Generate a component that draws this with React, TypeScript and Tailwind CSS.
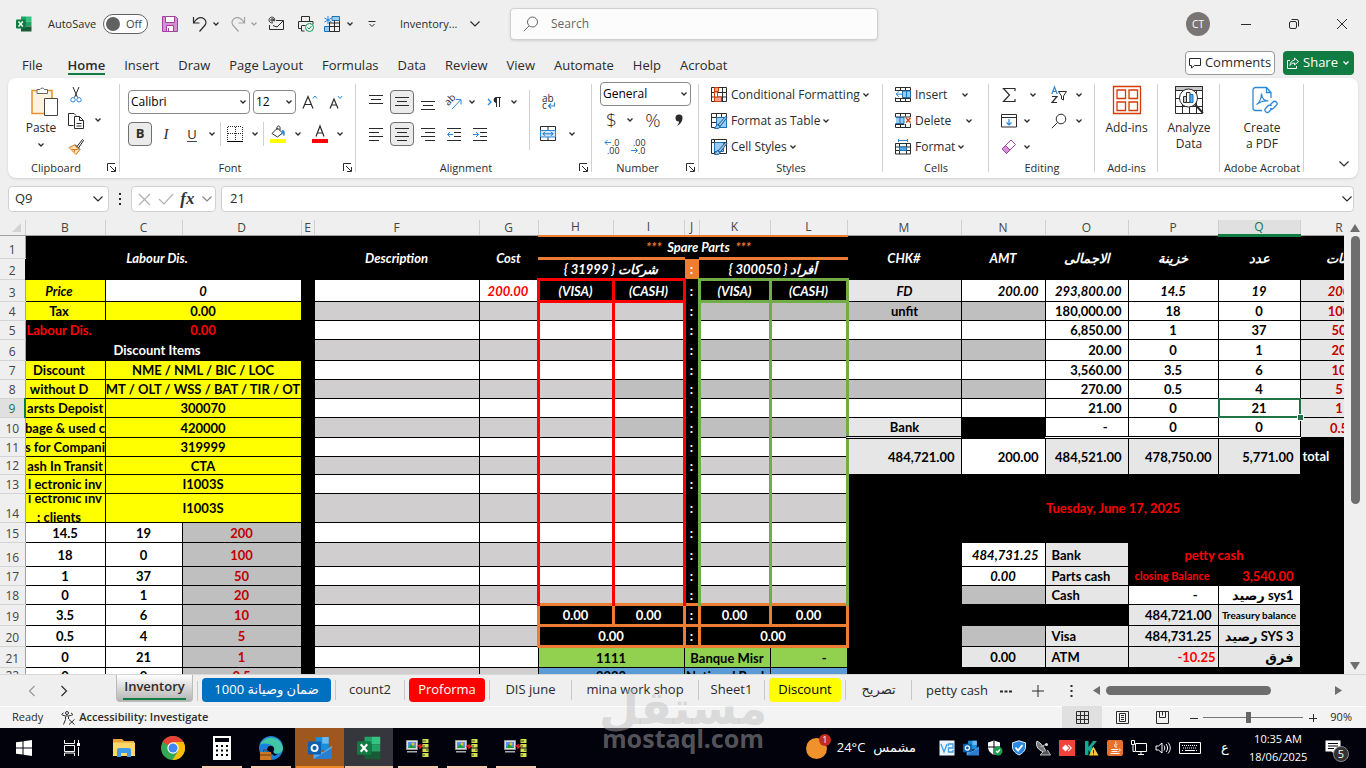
import type { ReactNode } from 'react'
import { clsx } from 'clsx'

function Ico({ w = 16, h = 16, className = '', children }: { w?: number; h?: number; className?: string; children: ReactNode }) {
  return (
    <svg width={w} height={h} viewBox={`0 0 ${w} ${h}`} fill="none" stroke="currentColor" className={`shrink-0 overflow-visible ${className}`} aria-hidden>
      {children}
    </svg>
  )
}

function Chev({ className = '' }: { className?: string }) {
  return (
    <Ico w={8} h={6} className={className}>
      <path d="M1.500 1.500 4 4l2.500-2.500" strokeWidth="1.300" />
    </Ico>
  )
}

function WideChev({ className = '' }: { className?: string }) {
  return (
    <Ico w={12} h={8} className={className}>
      <path d="m1.500 1.500 4.500 4.500 4.500-4.500" strokeWidth="1.200" />
    </Ico>
  )
}

function DropBtn({ label, className = 'w-4' }: { label: string; className?: string }) {
  return (
    <button aria-label={label} className={`flex h-6 shrink-0 items-center justify-center ${className}`}>
      <Chev />
    </button>
  )
}

function IconBtn({ label, active = false, className = 'w-6', children }: { label: string; active?: boolean; className?: string; children: ReactNode }) {
  return (
    <button
      aria-label={label}
      className={clsx('flex h-6 shrink-0 items-center justify-center', className, active && 'rounded border border-[#707070] bg-[#ebebeb]')}
    >
      {children}
    </button>
  )
}

/* ---------- title bar ---------- */

function ExcelLogo({ size = 16 }: { size?: number }) {
  return (
    <svg width={size} height={size} viewBox="0 0 16 16" aria-hidden className="shrink-0">
      <path d="M5 .5h5v5H5z" fill="#21a366" />
      <path d="M10 .5h5.500v5H10z" fill="#33c481" />
      <path d="M5 5.500h5v5H5z" fill="#107c41" />
      <path d="M10 5.500h5.500v5H10z" fill="#21a366" />
      <path d="M5 10.500h10.500v5H5z" fill="#185c37" />
      <rect x="0" y="3.500" width="9.500" height="9" rx="1" fill="#107c41" />
      <path d="m2.500 5.500 4.300 5M6.800 5.500l-4.300 5" stroke="#fff" strokeWidth="1.400" />
    </svg>
  )
}

function TitleBar() {
  return (
    <header className="flex h-12 shrink-0 items-center">
      <div className="flex w-[502px] shrink-0 items-center pl-4">
        <ExcelLogo />
        <span className="ml-4 w-[55px] shrink-0 text-[11px]">AutoSave</span>
        <button role="switch" aria-checked="false" className="flex h-5 w-[45px] shrink-0 items-center rounded-full border border-[#616161] bg-white pl-0.5 text-[11px] text-[#444]">
          <span className="mr-1.5 size-3.5 rounded-full bg-[#616161]" />
          Off
        </button>
        <IconBtn label="Save" className="ml-2 w-7">
          <Ico>
            <path d="M.5.5h13l2 2v13H.5z" fill="#d58fd3" stroke="#a33fa1" />
            <path d="M3.500.5h9v6h-9zM4.500 9.500h7v6h-7z" fill="#fff" stroke="#a33fa1" />
            <path d="M6.500 12v3" stroke="#a33fa1" />
          </Ico>
        </IconBtn>
        <IconBtn label="Undo" className="ml-1.5 w-5">
          <Ico>
            <path d="M1.500 1v6h6M1.800 6.600C5 2 9 .8 12 2.800c3 2.200 2.300 5.200.3 7.200L7.500 15.500" strokeWidth="1.200" />
          </Ico>
        </IconBtn>
        <DropBtn label="Undo list" className="w-3" />
        <IconBtn label="Redo" className="ml-1.5 w-5 text-[#a3a3a3]">
          <Ico>
            <path d="M14.500 1v6h-6M14.200 6.600C11 2 7 .8 4 2.800 1 5 1.700 8 3.700 10l4.800 5.500" strokeWidth="1.200" />
          </Ico>
        </IconBtn>
        <DropBtn label="Redo list" className="w-3 text-[#a3a3a3]" />
        <IconBtn label="Email" className="ml-1 w-6">
          <Ico>
            <path d="M8 4.500h7.500v9H1.500V9M5 9.500l4 1.500 6-6" />
            <circle cx="4" cy="4" r="1.200" />
            <path d="M5.300 2.700v2c.4.8 1.500.5 1.500-.7A2.900 2.900 0 1 0 5 6.700" />
          </Ico>
        </IconBtn>
        <IconBtn label="Quick Print" className="ml-1 w-7">
          <Ico>
            <path d="M3.500 5.500v-5h8v5M4 12.500H.5v-7h14.500v3M3.500 10v5h3M3.500 9.500h4M12 7.500h1" />
            <circle cx="11.500" cy="11.500" r="4" fill="#e8f5ee" stroke="#1f9a5c" />
            <path d="m9.500 11.500 1.500 1.500 2.500-3" stroke="#1f9a5c" />
          </Ico>
        </IconBtn>
        <IconBtn label="Freeze Panes">
          <Ico>
            <path d="M.5 10.500h5v5h-5zM8 .5h7.500v4H8z" fill="#9ccbf0" stroke="#1a73b8" />
            <path d="M5.500 6v9.500h10v-11M5.500 10.500h10M10.500 4.500v11M5.500 7h10" />
            <path d="M4 0v8M.5 2l7 4M7.500 2l-7 4" stroke="#2b88d8" />
          </Ico>
        </IconBtn>
        <DropBtn label="Freeze options" className="w-3" />
        <button aria-label="Customize Quick Access Toolbar" className="flex h-6 w-8 shrink-0 items-center justify-center">
          <Ico w={8} h={8}>
            <path d="M.5 1.500h7M1.500 4 4 6.500 6.500 4" />
          </Ico>
        </button>
        <button className="ml-3 flex items-center gap-3 text-[11px]">
          Inventory... <WideChev />
        </button>
      </div>
      <label className="ml-2 flex h-8 w-[368px] items-center rounded border border-[#d0d0d0] bg-[#fcfcfc] pl-3 shadow-sm">
        <Ico className="mr-3 text-[#666]">
          <circle cx="9.500" cy="6" r="5" />
          <path d="M6 10 .8 15.200" />
        </Ico>
        <input aria-label="Search" placeholder="Search" className="min-w-0 flex-1 bg-transparent text-xs outline-none placeholder:text-[#666]" />
      </label>
      <span className="mr-3 ml-auto flex size-6 items-center justify-center rounded-full bg-[#7a7574] text-[10px] text-white">CT</span>
      <IconBtn label="Minimize" className="w-12">
        <Ico w={10} h={10}><path d="M0 5.500h10" /></Ico>
      </IconBtn>
      <IconBtn label="Restore" className="w-12">
        <Ico w={10} h={10}>
          <rect x=".5" y="2.500" width="7" height="7" rx="1.500" />
          <path d="M2.500.5H8A1.500 1.500 0 0 1 9.500 2v5.500" />
        </Ico>
      </IconBtn>
      <IconBtn label="Close" className="w-12">
        <Ico w={10} h={10}><path d="m0 0 10 10M10 0 0 10" /></Ico>
      </IconBtn>
    </header>
  )
}

const menuTabs = ['File', 'Home', 'Insert', 'Draw', 'Page Layout', 'Formulas', 'Data', 'Review', 'View', 'Automate', 'Help', 'Acrobat']

function MenuBar() {
  return (
    <nav className="flex h-[30px] shrink-0 items-center pr-3 pl-[22px]">
      <div className="flex gap-[19px] text-[13px]">
        {menuTabs.map((tab) => (
          <button
            key={tab}
            className={clsx('h-6 border-b-2 pt-1 leading-5 whitespace-nowrap', tab === 'Home' ? 'ml-1.5 border-[#107c41] font-semibold' : 'border-transparent')}
          >
            {tab}
          </button>
        ))}
      </div>
      <button className="ml-auto flex h-6 w-[90px] items-center justify-center gap-1 rounded border border-[#999] bg-white text-[13px]">
        <Ico w={12} h={12}>
          <path d="M.5 1.500h11v7h-6l-3 2.500V8.500h-2z" />
        </Ico>
        Comments
      </button>
      <button className="ml-2 flex h-6 w-[71px] items-center justify-center gap-1 rounded bg-[#107c41] text-[13px] text-white">
        <Ico w={12} h={12}>
          <path d="M3 3.500H.5v8h9V9M7.500 1l4 3.500-4 3.500V6C5 6 4 7 3 8.500 3 5.500 5 3.500 7.500 3z" />
        </Ico>
        Share
        <Chev />
      </button>
    </nav>
  )
}

/* ---------- ribbon ---------- */

function Group({ label, width, launcher = false, children }: { label: string; width: string; launcher?: boolean; children: ReactNode }) {
  return (
    <section aria-label={label || undefined} className={`relative flex shrink-0 flex-col ${width}`}>
      <div className="h-20">{children}</div>
      <div className={clsx('flex h-5 items-center justify-center text-[11px] whitespace-nowrap', launcher && 'pr-4')}>{label}</div>
      {launcher && (
        <button aria-label={`${label} settings`} className="absolute right-1 bottom-1.5">
          <Ico w={9} h={9}>
            <path d="M.5 8V.5H8M3 3l5 5M8.500 4v4.500H4" />
          </Ico>
        </button>
      )}
      <span className="absolute top-1.5 right-0 bottom-1.5 w-px bg-[#d1d1d1]" />
    </section>
  )
}

function Combo({ label, value, className }: { label: string; value: string; className: string }) {
  return (
    <label className={`relative block h-6 rounded border border-[#8a8a8a] bg-white ${className}`}>
      <select aria-label={label} className="block h-full w-full appearance-none bg-transparent pl-0.5 text-xs text-black outline-none">
        <option>{value}</option>
      </select>
      <Chev className="pointer-events-none absolute top-2 right-0.5" />
    </label>
  )
}

function AlignIcon({ rows }: { rows: [number, number, number][] }) {
  return (
    <Ico>
      {rows.map(([y, a, b]) => (
        <path key={y} d={`M${a} ${y}.5H${b}`} />
      ))}
    </Ico>
  )
}

function ClipboardGroup() {
  return (
    <Group label="Clipboard" width="w-28" launcher>
      <div className="flex pt-1">
        <button className="ml-[11px] flex w-11 flex-col items-center text-xs">
          <Ico w={30} h={32} className="mt-1 ml-1">
            <path d="M4 4.500h20v23H4z" fill="#fff3df" stroke="#e8912d" strokeWidth="1.500" />
            <path d="M9 7.500v-4h3a2.500 2.500 0 0 1 4.500 0h3v4z" fill="#fff" stroke="#666" />
            <path d="M16.500 12.500h13v17h-13z" fill="#fff" stroke="#444" />
          </Ico>
          <span className="leading-5">Paste</span>
          <Chev className="mt-1" />
        </button>
        <div className="ml-[3px] flex flex-col">
          <button aria-label="Cut" className="flex h-[26px] w-5 items-center justify-center">
            <Ico>
              <path d="M5 0l4.500 10.500M11 0 6.500 10.500" />
              <circle cx="5" cy="12.800" r="2.200" stroke="#2b88d8" />
              <circle cx="11" cy="12.800" r="2.200" stroke="#2b88d8" />
            </Ico>
          </button>
          <button aria-label="Copy" className="flex h-[26px] w-5 items-center justify-center">
            <Ico>
              <path d="M5.500 12.500h-5V.5h5.500l2 2" />
              <path d="M6.500 3.500h5l4 4v8h-9zM11.500 3.500v4h4M8.500 10.500h5M8.500 13h5" />
            </Ico>
          </button>
          <button aria-label="Format Painter" className="flex h-[26px] w-5 items-center justify-center">
            <Ico>
              <path d="M1 8.500 6.500 6l5 5-3.500 4.500z" fill="#fbe0b8" stroke="#e07b12" />
              <path d="M3.500 10.500h6M6 13l1-3" stroke="#e07b12" />
              <path d="m7 5.500 5 5M9 7.500l5.500-7 1 1-5 7.500" />
            </Ico>
          </button>
        </div>
        <DropBtn label="Copy options" className="mt-[26px] w-6" />
      </div>
    </Group>
  )
}

function FontGroup() {
  return (
    <Group label="Font" width="w-[236px]" launcher>
      <div className="flex flex-col gap-2 pt-3 pl-2">
        <div className="flex items-center">
          <Combo label="Font name" value="Calibri" className="w-[122px]" />
          <Combo label="Font size" value="12" className="ml-[3px] w-[43px]" />
          <IconBtn label="Increase Font Size" className="w-7">
            <Ico>
              <path d="M1 14.500 6 2.500l5 12M3 10.500h6" strokeWidth="1.200" />
              <path d="M11 4.500 13 2l2 2.500" stroke="#2b88d8" />
            </Ico>
          </IconBtn>
          <IconBtn label="Decrease Font Size" className="w-6">
            <Ico>
              <path d="M2 14.500 6 5l4 9.500M3.500 11h5" strokeWidth="1.200" />
              <path d="m10 2 2 2.500L14 2" stroke="#2b88d8" />
            </Ico>
          </IconBtn>
        </div>
        <div className="flex items-center">
          <IconBtn label="Bold" active><b className="text-[13px]">B</b></IconBtn>
          <IconBtn label="Italic" className="ml-0.5 w-6"><i className="font-['Liberation_Serif',serif] text-[15px]">I</i></IconBtn>
          <IconBtn label="Underline" className="ml-0.5 w-6"><span className="border-b border-[#444] text-[13px] leading-[14px]">U</span></IconBtn>
          <DropBtn label="Underline options" />
          <span className="mr-0.5 h-6 w-px bg-[#d1d1d1]" />
          <IconBtn label="Borders">
            <Ico>
              <path d="M.5 1v13M8.500 1v13M15.500 1v13M1 .5h14M1 7.500h14" strokeDasharray="1 1" />
              <path d="M0 15.500h16" stroke="#000" />
            </Ico>
          </IconBtn>
          <DropBtn label="Border options" />
          <span className="mr-0.5 h-6 w-px bg-[#d1d1d1]" />
          <IconBtn label="Fill Color">
            <Ico h={18}>
              <path d="M2 8.500 7.500 3l5 5-5 4z" fill="#fff" />
              <path d="M7 5V2.500C7 .5 10 .5 10 2.500V5" />
              <path d="M12 5.500c2-.5 2.500 1 2 5-1.500-1-1-3.500-2-5z" fill="#2b88d8" stroke="#2b88d8" />
              <path d="M0 16h16" stroke="#ffff00" strokeWidth="4" />
            </Ico>
          </IconBtn>
          <DropBtn label="Fill options" />
          <IconBtn label="Font Color" className="ml-0.5 w-6">
            <Ico h={18}>
              <path d="M4 11.500 8 1l4 10.500M5.500 8h5" strokeWidth="1.200" />
              <path d="M0 16h16" stroke="#ff0000" strokeWidth="4" />
            </Ico>
          </IconBtn>
          <DropBtn label="Font color options" />
        </div>
      </div>
    </Group>
  )
}

function AlignmentGroup() {
  return (
    <Group label="Alignment" width="w-[236px]" launcher>
      <div className="flex pt-3 pl-2">
        <div className="flex w-[165px] flex-col gap-2">
          <div className="flex gap-0.5">
            <IconBtn label="Top Align"><AlignIcon rows={[[1, 1, 15], [5, 3, 13], [9, 1, 15]]} /></IconBtn>
            <IconBtn label="Middle Align" active><AlignIcon rows={[[3, 1, 15], [7, 3, 13], [11, 1, 15]]} /></IconBtn>
            <IconBtn label="Bottom Align"><AlignIcon rows={[[7, 1, 15], [11, 3, 13], [15, 1, 15]]} /></IconBtn>
            <IconBtn label="Orientation">
              <Ico>
                <text x="0" y="9" fontSize="10" fill="currentColor" stroke="none" transform="rotate(-45 5 8)">ab</text>
                <path d="m6 15 8.500-9M10 5.500h5v5" stroke="#2b88d8" />
              </Ico>
            </IconBtn>
            <DropBtn label="Orientation options" className="w-2" />
            <IconBtn label="Text Direction" className="ml-1 w-6">
              <Ico>
                <path d="m2 5 3 3-3 3" stroke="#2b88d8" strokeWidth="1.300" />
                <path d="M10.500 13V3.500M13.500 13V3.500M15 3.500H9.500" />
                <path d="M10.500 3.500v5a2.500 2.500 0 0 1 0-5z" fill="currentColor" />
              </Ico>
            </IconBtn>
            <DropBtn label="Direction options" className="w-3" />
          </div>
          <div className="flex gap-0.5">
            <IconBtn label="Align Left"><AlignIcon rows={[[2, 1, 15], [6, 1, 11], [10, 1, 15], [14, 1, 11]]} /></IconBtn>
            <IconBtn label="Center" active><AlignIcon rows={[[2, 1, 15], [6, 3, 13], [10, 1, 15], [14, 3, 13]]} /></IconBtn>
            <IconBtn label="Align Right"><AlignIcon rows={[[2, 1, 15], [6, 5, 15], [10, 1, 15], [14, 5, 15]]} /></IconBtn>
            <IconBtn label="Decrease Indent">
              <Ico>
                <path d="M1 2.500h14M8 6.500h7M8 10.500h7M1 14.500h14" />
                <path d="M7 8.500H1.500M4 6 1.500 8.500 4 11" stroke="#2b88d8" />
              </Ico>
            </IconBtn>
            <IconBtn label="Increase Indent">
              <Ico>
                <path d="M1 2.500h14M8 6.500h7M8 10.500h7M1 14.500h14" />
                <path d="M1 8.500h5.500M4 6l2.500 2.500L4 11" stroke="#2b88d8" />
              </Ico>
            </IconBtn>
          </div>
        </div>
        <span className="h-[60px] w-px bg-[#d1d1d1]" />
        <div className="flex flex-col gap-2 pl-1.5">
          <IconBtn label="Wrap Text">
            <Ico>
              <text x="2" y="8" fontSize="10" fill="currentColor" stroke="none">ab</text>
              <text x="2" y="15" fontSize="10" fill="currentColor" stroke="none">c</text>
              <path d="M14.500 8.500v3.500H8.500M11 9.500 8.500 12l2.500 2.500" stroke="#2b88d8" strokeWidth="1.200" />
            </Ico>
          </IconBtn>
          <div className="flex">
            <IconBtn label="Merge and Center">
              <Ico>
                <path d="M.5.500h15v14H.5zM8 .5v4M8 11v4" />
                <path d="M.5 4.500h15v6.500H.5z" fill="#cfe6fa" stroke="#2b88d8" />
                <path d="M3 7.800h10M5 5.800l-2 2 2 2M11 5.800l2 2-2 2" stroke="#1a73b8" />
              </Ico>
            </IconBtn>
            <DropBtn label="Merge options" className="w-6" />
          </div>
        </div>
      </div>
    </Group>
  )
}

function NumberGroup() {
  return (
    <Group label="Number" width="w-[107px]" launcher>
      <div className="pt-1 pl-2">
        <Combo label="Number format" value="General" className="w-[91px]" />
        <div className="mt-0.5 flex h-6 items-center text-[19px] font-light">
          <button aria-label="Currency" className="w-[23px]">$</button>
          <DropBtn label="Currency options" className="w-3.5" />
          <button aria-label="Percent" className="w-8 text-center">%</button>
          <button aria-label="Comma style" className="flex h-6 w-5 items-center justify-center">
            <Ico w={10} h={14}>
              <path d="M5 1.500a3.200 3.200 0 0 1 3.500 3.300C8.500 9 6 11.500 3 13c1.300-1.700 2-3 2-4.500A3.300 3.300 0 1 1 5 1.500z" fill="currentColor" stroke="none" />
            </Ico>
          </button>
        </div>
        <div className="mt-0.5 flex h-6 items-center gap-0.5">
          <IconBtn label="Increase Decimal">
            <Ico>
              <path d="M7 4.500H1M3.500 2 1 4.500 3.500 7" stroke="#2b88d8" />
              <text x="8" y="8" fontSize="9" fill="currentColor" stroke="none">.0</text>
              <text x="3" y="16" fontSize="9" fill="currentColor" stroke="none">.00</text>
            </Ico>
          </IconBtn>
          <IconBtn label="Decrease Decimal">
            <Ico>
              <text x="3" y="8" fontSize="9" fill="currentColor" stroke="none">.00</text>
              <text x="8" y="16" fontSize="9" fill="currentColor" stroke="none">.0</text>
              <path d="M1 12.500h6.500M5 10l2.500 2.500L5 15" stroke="#2b88d8" />
            </Ico>
          </IconBtn>
        </div>
      </div>
    </Group>
  )
}

function ListBtn({ icon, text, gap = 'ml-1' }: { icon: ReactNode; text: string; gap?: string }) {
  return (
    <button className="flex h-[26px] items-center text-xs whitespace-nowrap">
      {icon}
      <span className="ml-1">{text}</span>
      <Chev className={gap} />
    </button>
  )
}

const brush = <path d="m7 12 7.500-8.500 1.500 1-7 9zM7 11.500c-2 0-1.500 3-4 3.500 3 1 6 .5 6-1.500z" fill="#9ccbf0" stroke="#1a5a96" />

function StylesGroup() {
  return (
    <Group label="Styles" width="w-[184px]">
      <div className="flex flex-col items-start pt-1 pl-3">
        <ListBtn
          text="Conditional Formatting"
          gap="ml-0.5"
          icon={
            <Ico>
              <path d="M.5.500h15v14H.5zM.5 5.500h15M.5 10h15M11.500.500v14M3.500.500v14" />
              <path d="M3.500.5h4v4h-4zM3.500 10h7v4.500h-7z" fill="#f4a58a" stroke="#d83b01" />
              <path d="M3.500 5h3v5h-3z" fill="#fff" stroke="#d83b01" />
            </Ico>
          }
        />
        <ListBtn
          text="Format as Table"
          gap="ml-0.5"
          icon={
            <Ico>
              <path d="M.5.500h15v14H.5zM.5 4.500h15M.5 9.500h15M5.500.500v14M10.500.500v14" />
              <path d="M5.500 4.500h10v10h-10z" fill="#9ccbf0" stroke="#1a73b8" />
              {brush}
            </Ico>
          }
        />
        <ListBtn
          text="Cell Styles"
          gap="ml-0.5"
          icon={
            <Ico>
              <path d="M.5.500h15v14H.5zM.5 3.500h15M3.500.500v14" />
              <path d="M3.500 3.500h9v9h-9z" fill="#9ccbf0" stroke="#1a73b8" />
              {brush}
            </Ico>
          }
        />
      </div>
    </Group>
  )
}

function CellsGroup() {
  return (
    <Group label="Cells" width="w-[106px]">
      <div className="flex flex-col items-start pt-1 pl-3">
        <ListBtn
          text="Insert"
          gap="ml-3.5"
          icon={
            <Ico>
              <path d="M.5 4V.5h15v3H.5M5.500.500v3M10.500.500v3M.5 10.500v4h15v-4M5.500 11v3M10.500 11v3M.5 11.500h15" />
              <path d="M7.500 4h8v6.500h-8zM11.500 4v6.500" fill="#9ccbf0" stroke="#1a73b8" />
              <path d="M8 7.200H1M4 4.500 1 7.200 4 10" stroke="#2b88d8" />
            </Ico>
          }
        />
        <ListBtn
          text="Delete"
          gap="ml-3.5"
          icon={
            <Ico>
              <path d="M.5 4V.5h15V4H.5M5.500.500v3M10.500.500v3M.5 10.500v4h15v-4M5.500 11v3M10.500 11v3M.5 11.500h9" />
              <path d="M1 4.500h8v6H1M5 4.500v6" fill="#9ccbf0" stroke="#1a73b8" />
              <path d="m11 5 4.500 4.500M15.500 5 11 9.500" stroke="#d83b01" strokeWidth="1.300" />
            </Ico>
          }
        />
        <ListBtn
          text="Format"
          gap="ml-0.5"
          icon={
            <Ico>
              <path d="M.5 4.500h15v10.500H.5zM.5 8h15M.5 11.500h15M4.500 4.500v10.500M11.500 4.500v10.500" />
              <path d="M4.500 8h7v3.500h-7z" fill="#5aa9e6" stroke="#1a73b8" />
              <path d="M3.500 1.500h9M3.500 0v3M12.500 0v3" stroke="#2b88d8" />
            </Ico>
          }
        />
      </div>
    </Group>
  )
}

function EditingGroup() {
  return (
    <Group label="Editing" width="w-[106px]">
      <div className="flex pt-1 pl-2">
        <div className="flex w-[50px] flex-col">
          <div className="flex h-[26px] items-center">
            <IconBtn label="AutoSum"><Ico><path d="M14 4V1.500H2.500L8.500 8l-6 6.500H14V12" strokeWidth="1.200" /></Ico></IconBtn>
            <DropBtn label="Sum options" className="ml-1 w-4" />
          </div>
          <div className="flex h-[26px] items-center">
            <IconBtn label="Fill">
              <Ico>
                <path d="M.5 1.500h15v12.500H.5zM.5 4.500h15" />
                <path d="M8 6v6M5.500 9.500 8 12l2.500-2.500" stroke="#2b88d8" strokeWidth="1.200" />
              </Ico>
            </IconBtn>
            <DropBtn label="Fill list" className="w-3" />
          </div>
          <div className="flex h-[26px] items-center">
            <IconBtn label="Clear">
              <Ico>
                <path d="M1 10 10 1l4.500 4.500-9 9z" fill="#fff" stroke="#a33fa1" />
                <path d="m1 10 3.500-3.500 4.500 4.500-3.500 3.500z" fill="#d58fd3" stroke="#a33fa1" />
              </Ico>
            </IconBtn>
            <DropBtn label="Clear list" className="w-3" />
          </div>
        </div>
        <div className="flex flex-col">
          <div className="flex h-[26px] items-center">
            <IconBtn label="Sort and Filter">
              <Ico>
                <path d="M.8 7 3.500 0l2.700 7M1.800 4.500h3.500" stroke="#2b88d8" strokeWidth="1.200" />
                <path d="M1 9.500h5L1 15.500h5" strokeWidth="1.200" />
                <path d="M7.500 4.500h8L12.500 9v4l-2-1V9z" />
              </Ico>
            </IconBtn>
            <DropBtn label="Sort list" />
          </div>
          <div className="flex h-[26px] items-center">
            <IconBtn label="Find and Select">
              <Ico>
                <circle cx="10" cy="6" r="4.800" />
                <path d="M6.500 9.500.8 15.200" />
              </Ico>
            </IconBtn>
            <DropBtn label="Find list" />
          </div>
        </div>
      </div>
    </Group>
  )
}

function BigBtn({ lines, icon }: { lines: string[]; icon: ReactNode }) {
  return (
    <button className="flex w-full flex-col items-center pt-2 text-xs leading-4">
      <span className="mb-1.5">{icon}</span>
      {lines.map((line) => (
        <span key={line}>{line}</span>
      ))}
    </button>
  )
}

function Ribbon() {
  return (
    <div className="relative mx-2 flex h-[100px] shrink-0 rounded-lg bg-white shadow">
      <ClipboardGroup />
      <FontGroup />
      <AlignmentGroup />
      <NumberGroup />
      <StylesGroup />
      <CellsGroup />
      <EditingGroup />
      <Group label="Add-ins" width="w-[63px]">
        <BigBtn
          lines={['Add-ins']}
          icon={
            <Ico w={28} h={28} className="text-[#d83b01]">
              <path d="M.5.500h27v27H.5zM4 4h8.500v8.500H4zM16 4h8.500v8.500H16zM4 16h8.500v8.500H4zM16 16h8.500v8.500H16z" strokeWidth="1.300" />
            </Ico>
          }
        />
      </Group>
      <Group label="" width="w-[62px]">
        <BigBtn
          lines={['Analyze', 'Data']}
          icon={
            <Ico w={28} h={28}>
              <path d="M.5.500h27v27H.5z" fill="#fff" />
              <path d="M.5.5h27v4H.5z" fill="#c8c8c8" />
              <path d="M.5 12.500h27M.5 20.500h27M7.500 5v22M14.500 5v22M21.500 5v22" />
              <circle cx="13.500" cy="12" r="9" fill="#fff" />
              <path d="m20 18.500 8 8.500" strokeWidth="2" />
              <path d="M8.500 10.500h3v6h-3z" fill="#ccc" />
              <path d="M11.500 6.500h3.500v10h-3.500z" fill="#fff" />
              <path d="M15 8.500h3v8h-3z" fill="#5aa9e6" stroke="#1a73b8" />
            </Ico>
          }
        />
      </Group>
      <Group label="Adobe Acrobat" width="w-[84px]">
        <BigBtn
          lines={['Create', 'a PDF']}
          icon={
            <Ico w={26} h={28} className="ml-1.5 text-[#2b88d8]">
              <path d="M10 24.500H3.500a2.500 2.500 0 0 1-2.500-2.500V4A2.500 2.500 0 0 1 3.500 1.500h11l4.500 5V12M14.500 1.500v5H19" strokeWidth="1.300" />
              <path d="M4.500 18.500c3-1.500 5-6.500 5-11 .5 5 3 7.500 7 7.500-5-.5-8 .5-12 3.500z" strokeWidth="1.200" />
              <path d="m18 19 3-3c2-2 5.500 1 3.500 3l-3 3.200c-1 1-2.500.8-3.200-.2" strokeWidth="1.300" />
              <path d="m20 22.500-3 3.300c-2 2-5.500-1-3.500-3.300l2.500-2.700c1-1 2.800-.8 3.500.2" strokeWidth="1.300" />
            </Ico>
          }
        />
      </Group>
      <button aria-label="Ribbon display options" className="absolute right-2 bottom-2.5">
        <WideChev />
      </button>
    </div>
  )
}

function FormulaBar() {
  return (
    <div className="flex h-[42px] shrink-0 items-center pr-3 pl-2">
      <label className="flex h-[26px] w-[101px] items-center rounded border border-[#d0d0d0] bg-white pr-1 pl-1.5">
        <input aria-label="Name box" defaultValue="Q9" className="min-w-0 flex-1 bg-transparent text-[13px] outline-none" />
        <WideChev />
      </label>
      <Ico w={4} h={12} className="mx-[9px]">
        <path d="M2 0v2M2 5v2M2 10v2" strokeWidth="2" />
      </Ico>
      <div className="flex h-[26px] w-[85px] items-center justify-between rounded border border-[#d0d0d0] bg-white pr-0.5 pl-1.5 text-[#b0b0b0]">
        <button aria-label="Cancel"><Ico w={13} h={13}><path d="m1 1 11 11M12 1 1 12" strokeWidth="1.200" /></Ico></button>
        <button aria-label="Enter"><Ico w={16} h={12}><path d="m1 6 5 5L15 1" strokeWidth="1.200" /></Ico></button>
        <button aria-label="Insert function" className="font-['Liberation_Serif',serif] text-[17px] leading-5 font-bold text-[#333] italic">fx</button>
        <WideChev className="text-[#888]" />
      </div>
      <label className="ml-[5px] flex h-[26px] flex-1 items-center rounded border border-[#d0d0d0] bg-white pl-2">
        <input aria-label="Formula" defaultValue="21" className="min-w-0 flex-1 bg-transparent text-[13px] outline-none" />
        <WideChev />
      </label>
    </div>
  )
}

/* ---------- worksheet ---------- */

type Cell = { t?: ReactNode; c?: string; a?: string; span?: number; rows?: number; tall?: boolean; active?: boolean }

const columns: [string, string][] = [
  ['B', 'w-[80px]'], ['C', 'w-[77px]'], ['D', 'w-[119px]'], ['E', 'w-[13px]'], ['F', 'w-[165px]'], ['G', 'w-[59px]'],
  ['H', 'w-[75px]'], ['I', 'w-[71px]'], ['J', 'w-[15px]'], ['K', 'w-[71px]'], ['L', 'w-[77px]'], ['M', 'w-[114px]'],
  ['N', 'w-[84px]'], ['O', 'w-[83px]'], ['P', 'w-[90px]'], ['Q', 'w-[82px]'], ['R', 'w-[78px]'],
]

const yellow = 'bg-[#ffff00]'
const black = 'bg-black text-white'
const blackRed = 'bg-black text-[#ff0000]'
const head = 'bg-black text-white italic'
const light = 'bg-[#d0cece]'
const mid = 'bg-[#bfbfbf]'
const pale = 'bg-[#e7e6e6]'
const redNum = 'bg-[#bfbfbf] text-[#c00000]'
const paleRed = 'bg-[#e7e6e6] text-[#c00000]'
const redBox = 'border-x-[3px] border-x-[#ff0000]'
const redBoxY = 'border-y-[3px] border-y-[#ff0000]'
const greenBox = 'border-x-[3px] border-x-[#70ad47]'
const greenBoxY = 'border-y-[3px] border-y-[#70ad47]'
const orangeBox = 'border-x-[3px] border-y-[3px] border-x-[#ed7d31] border-y-[#ed7d31] bg-black text-white'
const totalTop = 'border-t-[3px] border-t-black [border-top-style:double]'
const right = 'justify-end pr-1.5'
const left = 'justify-start pl-1.5'
// Centred text in the first columns sits left of the middle.
const shifted = 'justify-center pr-3'

const pair = (b: ReactNode, cd: string, a?: string): Cell[] => [{ t: b, c: yellow, a }, { t: cd, c: yellow, span: 2 }]
const counts = (b: string, c: string, d: string): Cell[] => [{ t: b }, { t: c }, { t: d, c: redNum }]

// Empty ledger lines: banded on even rows, darker on some of the cash columns.
const ledger = (n: number): Cell[] => {
  const band = n % 2 === 0
  const base = band ? light : 'bg-white'
  const cash = band && n >= 8 && n <= 10 ? mid : base
  const green = band && n <= 10 ? mid : base
  return [
    { c: base },
    { c: base },
    { c: `${base} ${redBox}` },
    { c: `${cash} ${redBox}` },
    { t: ':', c: black },
    { c: `${green} ${greenBox}` },
    { c: `${green} ${greenBox}` },
  ]
}

const money = (m: Cell, n: Cell, o: string, p: string, q: string, r: string): Cell[] => [
  m, n, { t: o, a: o === '-' ? 'justify-end pr-5' : right }, { t: p }, { t: q, active: q === '21' }, { t: r, c: paleRed },
]

const blank: Cell = { c: black }

const sheet: { h: string; cells: Cell[] }[] = [
  {
    h: 'h-[23px]',
    cells: [
      { t: 'Labour Dis.', c: head, a: shifted, span: 3, rows: 2 }, blank,
      { t: 'Description', c: head, rows: 2 }, { t: 'Cost', c: head, rows: 2 },
      {
        t: (
          <>
            <span className="text-[#ed7d31]">***</span>&nbsp; Spare Parts &nbsp;<span className="text-[#ed7d31]">***</span>
          </>
        ),
        c: `${head} border-t-2 border-t-[#ed7d31]`,
        a: 'justify-center pl-3',
        span: 5,
      },
      { t: 'CHK#', c: head, rows: 2 }, { t: 'AMT', c: head, rows: 2 }, { t: 'الاجمالى', c: head, rows: 2 },
      { t: 'خزينة', c: head, rows: 2 }, { t: 'عدد', c: head, rows: 2 }, { t: 'فئات', c: head, rows: 2 },
    ],
  },
  {
    h: 'h-[21px]',
    cells: [
      blank,
      { t: '{ 31999 } شركات', c: `${head} border-t-[3px] border-t-[#ed7d31]`, span: 2 },
      { t: ':', c: 'bg-[#ed7d31] text-white' },
      { t: '{ 300050 } أفراد', c: `${head} border-t-[3px] border-t-[#ed7d31]`, span: 2 },
    ],
  },
  {
    h: 'h-[22px]',
    cells: [
      { t: 'Price', c: `${yellow} italic`, a: shifted }, { t: '0', c: 'bg-white italic', span: 2 }, blank,
      {}, { t: '200.00', c: 'bg-white text-[#ff0000] italic' },
      { t: '(VISA)', c: `${head} ${redBox} ${redBoxY}` }, { t: '(CASH)', c: `${head} ${redBox} ${redBoxY}` },
      { t: ':', c: black },
      { t: '(VISA)', c: `${head} ${greenBox} ${greenBoxY}` }, { t: '(CASH)', c: `${head} ${greenBox} ${greenBoxY}` },
      { t: 'FD', c: `${pale} italic` }, { t: '200.00', c: 'bg-white italic', a: right },
      { t: '293,800.00', c: 'bg-white italic', a: right }, { t: '14.5', c: 'bg-white italic' },
      { t: '19', c: 'bg-white italic' }, { t: '200', c: `${paleRed} italic` },
    ],
  },
  { h: 'h-[19px]', cells: [...pair('Tax', '0.00', shifted), blank, ...ledger(4), ...money({ t: 'unfit', c: mid }, { c: mid }, '180,000.00', '18', '0', '100')] },
  {
    h: 'h-[19px]',
    cells: [{ t: 'Labour Dis.', c: blackRed, a: 'justify-start pl-px' }, { t: '0.00', c: blackRed, span: 2 }, blank, ...ledger(5), ...money({}, {}, '6,850.00', '1', '37', '50')],
  },
  { h: 'h-[21px]', cells: [{ t: 'Discount Items', c: black, a: shifted, span: 3 }, blank, ...ledger(6), ...money({ c: mid }, { c: mid }, '20.00', '0', '1', '20')] },
  { h: 'h-[19px]', cells: [...pair('Discount', 'NME / NML / BIC / LOC', shifted), blank, ...ledger(7), ...money({}, {}, '3,560.00', '3.5', '6', '10')] },
  { h: 'h-[19px]', cells: [...pair('without D', 'NMT / OLT / WSS / BAT / TIR / OTH', shifted), blank, ...ledger(8), ...money({ c: mid }, { c: mid }, '270.00', '0.5', '4', '5')] },
  { h: 'h-[19px]', cells: [...pair('arsts Depoist', '300070'), blank, ...ledger(9), ...money({}, {}, '21.00', '0', '21', '1')] },
  { h: 'h-[20px]', cells: [...pair('bage & used c', '420000'), blank, ...ledger(10), ...money({ t: 'Bank', c: pale }, blank, '-', '0', '0', '0.5')] },
  {
    h: 'h-[19px]',
    cells: [
      ...pair('s for Compani', '319999'), blank, ...ledger(11),
      { t: '484,721.00', c: `${pale} ${totalTop}`, a: right, rows: 2 },
      { t: '200.00', c: `bg-white ${totalTop}`, a: right, rows: 2 },
      { t: '484,521.00', c: `${pale} ${totalTop}`, a: right, rows: 2 },
      { t: '478,750.00', c: `${pale} ${totalTop}`, a: right, rows: 2 },
      { t: '5,771.00', c: `${pale} ${totalTop}`, a: right, rows: 2 },
      { t: 'total', c: black, a: 'justify-start pl-0.5', rows: 2 },
    ],
  },
  { h: 'h-[18px]', cells: [...pair('ash In Transit', 'CTA'), blank, ...ledger(12)] },
  { h: 'h-[19px]', cells: [...pair('l ectronic inv', 'I1003S'), blank, ...ledger(13), { c: black, span: 6 }] },
  {
    h: 'h-[29px]',
    cells: [
      {
        t: (
          <>
            <span className="block text-center leading-[19px]">l ectronic inv</span>
            <span className="block pr-3 text-center leading-[19px]">: clients</span>
          </>
        ),
        c: yellow,
        tall: true,
      },
      { t: 'I1003S', c: yellow, span: 2 }, blank, ...ledger(14), { t: 'Tuesday, June 17, 2025', c: blackRed, span: 6 },
    ],
  },
  { h: 'h-[20px]', cells: [...counts('14.5', '19', '200'), blank, ...ledger(15), { c: black, span: 6 }] },
  {
    h: 'h-[24px]',
    cells: [
      ...counts('18', '0', '100'), blank, ...ledger(16), blank,
      { t: '484,731.25', c: 'bg-white italic', a: right }, { t: 'Bank', c: pale, a: left },
      { t: 'petty cash', c: blackRed, span: 2 }, blank,
    ],
  },
  {
    h: 'h-[19px]',
    cells: [
      ...counts('1', '37', '50'), blank, ...ledger(17), blank,
      { t: '0.00', c: 'bg-white italic' }, { t: 'Parts cash', c: pale, a: left },
      { t: 'closing Balance', c: `${blackRed} text-[11px]`, a: left }, { t: '3,540.00', c: blackRed, a: right }, blank,
    ],
  },
  {
    h: 'h-[19px]',
    cells: [
      ...counts('0', '1', '20'), blank, ...ledger(18), blank,
      { c: mid }, { t: 'Cash', c: pale, a: left }, { t: '-', a: 'justify-end pr-5' }, { t: 'رصيد sys1', a: right }, blank,
    ],
  },
  {
    h: 'h-[21px]',
    cells: [
      ...counts('3.5', '6', '10'), blank, {}, {},
      { t: '0.00', c: orangeBox }, { t: '0.00', c: orangeBox }, { t: ':', c: orangeBox }, { t: '0.00', c: orangeBox }, { t: '0.00', c: orangeBox },
      blank, { c: black, span: 2 }, { t: '484,721.00', c: pale, a: right }, { t: 'Treasury balance', c: `${pale} text-[10px]` }, blank,
    ],
  },
  {
    h: 'h-[21px]',
    cells: [
      ...counts('0.5', '4', '5'), blank, { c: light }, { c: light },
      { t: '0.00', c: orangeBox, span: 2 }, { t: ':', c: orangeBox }, { t: '0.00', c: orangeBox, span: 2 },
      blank, { c: mid }, { t: 'Visa', c: pale, a: left }, { t: '484,731.25', c: pale, a: right }, { t: 'رصيد SYS 3', c: pale, a: right }, blank,
    ],
  },
  {
    h: 'h-[21px]',
    cells: [
      ...counts('0', '21', '1'), blank, {}, {},
      { t: '1111', c: 'bg-[#92d050]', span: 2 }, { t: 'Banque Misr', c: 'bg-[#92d050]', span: 2 }, { t: '-', c: 'bg-[#92d050]', a: 'justify-end pr-5' },
      blank, { t: '0.00', c: pale }, { t: 'ATM', c: pale, a: left }, { t: '-10.25', c: `${pale} text-[#ff0000]`, a: 'justify-end pr-0.5' }, { t: 'فرق', c: pale, a: right }, blank,
    ],
  },
  {
    h: 'h-[17px]',
    cells: [
      ...counts('0', '0', '0.5'), blank, { c: light }, { c: light },
      { t: '2222', c: 'bg-[#5b9bd5]', span: 2 }, { t: 'National Bank', c: 'bg-[#5b9bd5]', span: 2 }, { c: 'bg-[#5b9bd5]' }, { c: black, span: 6 },
    ],
  },
]

function SheetCell({ t, c = 'bg-white', a = 'justify-center', span, rows, tall, active }: Cell) {
  return (
    <td colSpan={span} rowSpan={rows} className={clsx('border border-black p-0', active && 'relative', c)}>
      <div className={clsx('flex items-center overflow-hidden whitespace-nowrap', tall ? 'h-[27px]' : 'h-4 leading-4', a)}>
        <span className="shrink-0">{t}</span>
      </div>
      {active && (
        <span className="absolute -inset-px border-2 border-[#217346]">
          <span className="absolute -right-1 -bottom-1 size-[5px] bg-[#217346] outline outline-white" />
        </span>
      )}
    </td>
  )
}

function Worksheet() {
  return (
    <main className="flex min-h-0 flex-1">
      <div className="min-w-0 flex-1 overflow-hidden">
        <table className="w-[1378px] table-fixed border-collapse font-[Lato,'DejaVu_Sans',sans-serif] text-[13px] font-bold text-black">
          <colgroup>
            <col className="w-[25px]" />
            {columns.map(([name, width]) => (
              <col key={name} className={width} />
            ))}
          </colgroup>
          <thead className="font-['Open_Sans',sans-serif] text-xs text-[#444]">
            <tr className="h-[15px]">
              <th className="border-b border-[#a0a0a0] p-0">
                <svg width="9" height="9" viewBox="0 0 9 9" className="mr-1 ml-auto" aria-hidden><path d="M9 0v9H0z" fill="#d4d4d4" /></svg>
              </th>
              {columns.map(([name]) => (
                <th
                  key={name}
                  className={clsx(
                    'border-x border-b border-x-[#cfcfcf] p-0 leading-[14px] font-normal',
                    name === 'Q' ? 'border-b-[3px] border-b-[#107c41] bg-[#e0e0e0] text-[#217346]' : 'border-b-[#a0a0a0]',
                  )}
                >
                  {name}
                </th>
              ))}
            </tr>
          </thead>
          <tbody>
            {sheet.map((row, i) => (
              <tr key={i} className={row.h}>
                <th
                  className={clsx(
                    "border-y border-r border-y-[#d4d4d4] p-0 align-bottom font-['Open_Sans',sans-serif] text-xs leading-4 font-normal",
                    i === 8 ? 'border-r-2 border-r-[#107c41] bg-[#e0e0e0] text-[#217346]' : 'border-r-[#a0a0a0] text-[#444]',
                  )}
                >
                  {i + 1}
                </th>
                {row.cells.map((cell, j) => (
                  <SheetCell key={j} {...cell} />
                ))}
              </tr>
            ))}
          </tbody>
        </table>
      </div>
      <div className="flex w-[22px] flex-col items-center py-1">
        <svg width="10" height="8" viewBox="0 0 10 8" aria-hidden><path d="M5 0l5 8H0z" fill="#6e6e6e" /></svg>
        <div className="mt-1 h-[268px] w-[9px] rounded-full bg-[#6e6e6e]" />
        <svg width="10" height="8" viewBox="0 0 10 8" className="mt-auto" aria-hidden><path d="M5 8 0 0h10z" fill="#6e6e6e" /></svg>
      </div>
    </main>
  )
}

/* ---------- sheet tabs and status ---------- */

const sheetTabs: { name: string; w: string; cls?: string }[] = [
  { name: 'ضمان وصيانة 1000', w: 'w-[129px]', cls: 'rounded bg-[#0070c0] text-white' },
  { name: 'count2', w: 'w-[60px]' },
  { name: 'Proforma', w: 'w-[76px]', cls: 'rounded bg-[#ff0000] text-white' },
  { name: 'DIS june', w: 'w-[73px]' },
  { name: 'mina work shop', w: 'w-[118px]' },
  { name: 'Sheet1', w: 'w-[57px]' },
  { name: 'Discount', w: 'w-[72px]', cls: 'rounded bg-[#ffff00] text-black' },
  { name: 'تصريح', w: 'w-[57px]' },
]

function SheetTabs() {
  return (
    <div className="flex h-[33px] shrink-0 items-start border-t border-b border-t-[#d8d8d8] border-b-white text-[13px]">
      <div className="flex h-8 w-[116px] items-center gap-6 pl-7">
        <button aria-label="Previous sheet" className="text-[#999]"><Ico w={8} h={12}><path d="M6.500 1 1.500 6l5 5" strokeWidth="1.200" /></Ico></button>
        <button aria-label="Next sheet"><Ico w={8} h={12}><path d="m1.500 1 5 5-5 5" strokeWidth="1.200" /></Ico></button>
      </div>
      <button className="h-[27px] w-[77px] rounded-b border border-t-0 border-[#bbb] bg-linear-to-b from-white to-[#b4b4b4] px-1.5 font-semibold">
        <span className="flex h-[23px] items-center justify-center border-b-2 border-[#107c41]">Inventory</span>
      </button>
      <span className="mt-1.5 ml-1 h-5 w-px bg-[#c8c8c8]" />
      {sheetTabs.map((tab) => (
        <div key={tab.name} className="mt-[3px] flex items-center gap-1 pl-1">
          <button className={clsx('h-6 whitespace-nowrap', tab.w, tab.cls)}>{tab.name}</button>
          <span className="h-5 w-px bg-[#c8c8c8]" />
        </div>
      ))}
      <button className="ml-3.5 h-8 whitespace-nowrap">petty cash</button>
      <button aria-label="More sheets" className="flex h-8 w-9 items-center justify-center">
        <Ico w={12} h={3}><path d="M0 1.500h3M4.500 1.500h3M9 1.500h3" strokeWidth="2" /></Ico>
      </button>
      <button aria-label="New sheet" className="flex h-8 w-7 items-center justify-center">
        <Ico w={12} h={12}><path d="M6 0v12M0 6h12" /></Ico>
      </button>
      <span className="ml-auto flex h-8 items-center pr-4">
        <Ico w={3} h={12}><path d="M1.500 0v2M1.500 5v2M1.500 10v2" strokeWidth="2" /></Ico>
      </span>
      <div className="mr-5 flex h-[31px] w-[257px] shrink-0 items-center px-1">
        <svg width="7" height="9" viewBox="0 0 7 9" aria-hidden><path d="M7 0v9L0 4.500z" fill="#6e6e6e" /></svg>
        <div className="ml-1.5 h-[9px] w-[165px] rounded-full bg-[#6e6e6e]" />
        <svg width="7" height="9" viewBox="0 0 7 9" className="ml-auto" aria-hidden><path d="M0 0v9l7-4.500z" fill="#6e6e6e" /></svg>
      </div>
    </div>
  )
}

function StatusBar() {
  return (
    <div className="flex h-[21px] shrink-0 items-center bg-[#f3f3f3] pr-3.5 pl-3 text-[11px]">
      <span>Ready</span>
      <button className="ml-[18px] flex items-center gap-1 font-semibold">
        <Ico w={14} h={14}>
          <circle cx="6" cy="2" r="1.500" />
          <path d="M.5 3.500c3 2 8 2 11.500 0M4.500 5.500v3l-2 5M7.500 5.500V8M1 3l1.500-1M10 2l1.500 1M8 8.500l5.500 5M13.500 8.500 8 13.500" />
        </Ico>
        Accessibility: Investigate
      </button>
      <div className="ml-auto flex h-full items-center">
        <IconBtn label="Normal view" className="w-10 bg-[#e0e0e0]">
          <Ico w={13} h={13}><path d="M.5.5h12v12H.5zM.5 4.500h12M.5 8.500h12M4.500.5v12M8.500.5v12" /></Ico>
        </IconBtn>
        <IconBtn label="Page layout view" className="w-10">
          <Ico w={13} h={13}><path d="M.5.5h12v12H.5zM3.500 2.500h6v8h-6zM5 4.500h3M5 6.500h3M5 8.500h3" /></Ico>
        </IconBtn>
        <IconBtn label="Page break preview" className="w-10">
          <Ico w={13} h={13}><path d="M.5.5h12v12H.5zM3.500.5v6h6v-6M6.500.5v4" /></Ico>
        </IconBtn>
        <IconBtn label="Zoom out" className="ml-1 w-[15px]"><Ico w={8} h={8}><path d="M0 4.500h8" /></Ico></IconBtn>
        <input
          type="range"
          aria-label="Zoom"
          min={0}
          max={100}
          defaultValue={45}
          className="ml-0.5 w-[100px] appearance-none bg-transparent [&::-webkit-slider-runnable-track]:h-px [&::-webkit-slider-runnable-track]:bg-[#777] [&::-webkit-slider-thumb]:-mt-[5px] [&::-webkit-slider-thumb]:h-[11px] [&::-webkit-slider-thumb]:w-[5px] [&::-webkit-slider-thumb]:appearance-none [&::-webkit-slider-thumb]:bg-[#666]"
        />
        <IconBtn label="Zoom in" className="ml-0.5 w-[15px]"><Ico w={8} h={8}><path d="M0 4.500h8M4.500 0v8" /></Ico></IconBtn>
        <span className="ml-2 w-6 text-right">90%</span>
      </div>
    </div>
  )
}

/* ---------- taskbar ---------- */

function TaskSlot({ label, className = '', bar = '', children }: { label: string; className?: string; bar?: string; children: ReactNode }) {
  return (
    <button aria-label={label} className={`relative flex h-full w-[49px] items-center justify-center ${className}`}>
      {children}
      {bar && <span className={`absolute bottom-0 h-0.5 ${bar}`} />}
    </button>
  )
}

function NetworkApp() {
  return (
    <svg width="24" height="20" viewBox="0 0 24 20" aria-hidden>
      <path d="M.5 2.500h11v9H.5z" fill="#ddd" stroke="#999" />
      <path d="M2 4h8v6H2z" fill="#5090f0" />
      <path d="m2 10 3-4 5 4z" fill="#18a030" />
      <circle cx="7" cy="6" r="1.500" fill="#f0c020" />
      <path d="M1 13h10v1.500H1z" fill="#aaa" />
      <path d="m11 9 3-2v3l3-3" stroke="#ff2020" fill="none" strokeWidth="1.300" />
      <path d="M16.500 1h6v4h-6zM16.500 6h6v3.500h-6zM16.500 10.500h6V14h-6zM16.500 15h6v4h-6z" fill="#d4e050" />
      <path d="M17 3h3M17 8h2M20 12h2M17 17h2" stroke="#205020" />
    </svg>
  )
}

function OutlookIcon({ size = 22 }: { size?: number }) {
  return (
    <svg width={size} height={size} viewBox="0 0 22 22" aria-hidden className="shrink-0">
      <path d="M7 1h12v12H7z" fill="#1490df" />
      <path d="M13 1h6v6h-6z" fill="#6fb8ee" />
      <path d="M5 10l8.500 5L22 9v12H5z" fill="#5aa9e6" />
      <path d="m5 21 17-10v10z" fill="#2b7cd3" />
      <rect y="5" width="12" height="12" rx="1" fill="#0f5fb0" />
      <circle cx="6" cy="11" r="2.800" fill="none" stroke="#fff" strokeWidth="1.700" />
    </svg>
  )
}

function TrayIcons() {
  return (
    <div className="flex items-center gap-2">
      <Ico>
        <path d="M.5.5h15v15H.5z" fill="#eaf5ff" stroke="none" />
        <path d="m2 4 3 8 3-8M9.500 6V4H14v4H9.500v4H14v-2" stroke="#3f9be8" strokeWidth="1.300" />
      </Ico>
      <OutlookIcon size={16} />
      <Ico>
        <path d="M7 .5 1 2.500V7c0 4 3 6.500 6 8 3-1.500 6-4 6-8V2.500z" fill="#fff" stroke="none" />
        <path d="M7 .5V15M1 7h12" stroke="#02020c" />
        <circle cx="11" cy="11" r="4.500" fill="#18a04a" stroke="none" />
        <path d="m9 11 1.500 1.500L13 9.500" stroke="#fff" strokeWidth="1.300" />
      </Ico>
      <Ico>
        <path d="M8 .8 1.500 2.800V7c0 4 3.500 6.500 6.500 8 3-1.500 6.500-4 6.500-8V2.800z" fill="#2b88e0" stroke="#d8ecff" />
        <path d="m4.500 7.500 2.500 3 4.500-5.500" stroke="#fff" strokeWidth="1.800" />
      </Ico>
      <Ico>
        <path d="M2 1c-2 5 2 11 9 11C10 8 6 3 2 1z" fill="#777" stroke="#ddd" />
        <path d="M5.500 6.500 11 4.500M8 12l-3 3h10.500l-3-5" fill="#555" stroke="#bbb" />
        <circle cx="11.500" cy="4.500" r="1.500" fill="#ddd" stroke="none" />
      </Ico>
      <Ico>
        <path d="M0 0h16v16H0z" fill="#ef443b" stroke="none" />
        <path d="M6.500 4.500 3 8l3.500 3.500L10 8zM9.500 4.500 13 8l-3.500 3.500L8.800 10.800 11.500 8 8.800 5.200z" fill="#fff" stroke="none" />
      </Ico>
      <Ico>
        <path d="M2 1h3.500v6L10 1h4L9 7l5 8H9L5.500 10v5H2z" fill="#17a88c" stroke="none" />
        <path d="m10.500 6.500 5 9H6z" fill="#ffc83d" stroke="none" />
        <path d="M10.500 10v3M10.500 13.500v1" stroke="#222" />
      </Ico>
      <Ico>
        <rect width="16" height="16" rx="2" fill="#e8702a" stroke="none" />
        <path d="M8.500 1.500c2 2-3 3 0 6M10.500 4c-2 1-2 2-1 3.500M4 9.500h7M4.500 11.500h6M3.500 13.500h9M11.500 9c3 0 1.500 2.500 0 2.500" stroke="#fff" />
      </Ico>
      <Ico className="text-white">
        <path d="M4.500 3.500h11v8h-11zM10 11.500v3M7 14.500h6M.5.5h3v4h-3zM2 4.500v7h2" />
      </Ico>
      <Ico className="text-white">
        <path d="M1 6v4h2.500L7 13V3L3.500 6zM9 5.500c1 1.500 1 3.500 0 5M11 4c2 2.500 2 5.500 0 8M13 2.500c3 3.500 3 7.500 0 11" />
      </Ico>
      <Ico w={22} h={14} className="text-white">
        <path d="M.5 1.500h21v11H.5z" />
        <path d="M3 4.500h16M4 7h14M3 9.500h2M17 9.500h2" strokeDasharray="1 1" />
        <path d="M6 9.500h10" />
      </Ico>
    </div>
  )
}

function Taskbar() {
  return (
    <footer className="flex h-10 shrink-0 items-center bg-[#02020c] text-white">
      <button aria-label="Start" className="flex h-full w-12 items-center justify-center">
        <Ico><path d="M0 2.300 6.500 1.400v6.100H0zM7.500 1.300 16 0v7.500H7.500zM0 8.500h6.500v6.100L0 13.700zM7.500 8.500H16V16l-8.500-1.300z" fill="#fff" stroke="none" /></Ico>
      </button>
      <button aria-label="Task View" className="flex h-full w-12 items-center justify-center">
        <Ico><path d="M.5 0v3.500h10V0M.5 5.500h10v6H.5zM.5 16v-3h10v3M14.500 0v3M14.500 7v9" /><path d="M13 3h3v3h-3z" fill="#fff" stroke="none" /></Ico>
      </button>
      <div className="ml-[3px] flex h-full">
        <TaskSlot label="File Explorer">
          <svg width="22" height="18" viewBox="0 0 22 18" aria-hidden>
            <path d="M0 0h9l2 2h10v15H0z" fill="#e8a33d" />
            <path d="M0 3.500h22V17H0z" fill="#ffd867" />
            <path d="M4 18v-7a2 2 0 0 1 2-2h10a2 2 0 0 1 2 2v7h-4v-4H8v4z" fill="#3f9be8" />
          </svg>
        </TaskSlot>
        <TaskSlot label="Chrome">
          <svg width="24" height="24" viewBox="0 0 24 24" aria-hidden>
            <circle cx="12" cy="12" r="12" fill="#34a853" />
            <path d="M12 12 1.600 6A12 12 0 0 1 22.400 6z" fill="#ea4335" />
            <path d="M12 6h10.400A12 12 0 0 1 11.500 24l5.700-9z" fill="#fbbc05" />
            <circle cx="12" cy="12" r="5.700" fill="#fff" />
            <circle cx="12" cy="12" r="4.500" fill="#4285f4" />
          </svg>
        </TaskSlot>
        <TaskSlot label="Calculator" bar="w-10 bg-[#f5c9b0]">
          <svg width="18" height="24" viewBox="0 0 18 24" aria-hidden>
            <path d="M0 0h18v24H0z" fill="#fff" />
            <path d="M2 2h14v4H2z" fill="#02020c" />
            <path d="M3 10h12M3 14.500h12M3 19h12" stroke="#02020c" strokeWidth="2" strokeDasharray="2 3" />
          </svg>
        </TaskSlot>
        <TaskSlot label="Edge" bar="w-10 bg-[#f5c9b0]">
          <svg width="24" height="24" viewBox="0 0 24 24" aria-hidden>
            <circle cx="12" cy="12" r="12" fill="#1e7fd6" />
            <path d="M1 9a12 12 0 0 1 23 3c0 4-3 5.500-6 5.500-4 0-3-2-2.500-4C16 9.500 7 5 1 9z" fill="#42c7a4" />
            <path d="M8 14c0-4 4-5 6-3.500 1 1 1.500 2.500.5 4-1 2 1 4 4 3.500l-3 2z" fill="#02020c" />
            <path d="M1 16h11v8H1z" fill="#c87a28" />
            <path d="M1 19h11M4.500 16v-2h4v2" stroke="#6b3d10" fill="none" />
          </svg>
        </TaskSlot>
        <TaskSlot label="Outlook" className="bg-[#9d571f]" bar="w-12 bg-[#f08a24]">
          <OutlookIcon size={24} />
        </TaskSlot>
        <TaskSlot label="Excel" className="bg-[#36373c]" bar="w-12 bg-[#f5c9b0]">
          <ExcelLogo size={24} />
        </TaskSlot>
        <TaskSlot label="Network app" bar="w-10 bg-[#f5c9b0]"><NetworkApp /></TaskSlot>
        <TaskSlot label="Network app 2" bar="w-10 bg-[#f5c9b0]"><NetworkApp /></TaskSlot>
        <TaskSlot label="Network app 3" bar="w-10 bg-[#f5c9b0]"><NetworkApp /></TaskSlot>
      </div>
      <button className="mr-[23px] ml-auto flex items-center text-[13px] whitespace-nowrap">
        <span className="relative mr-2.5 size-[21px] rounded-full bg-[#f0922b]">
          <span className="absolute -top-1 -right-1 flex size-3 items-center justify-center rounded-full bg-[#c42b1c] text-[9px]">1</span>
        </span>
        24°C <span className="ml-2">مشمس</span>
      </button>
      <TrayIcons />
      <span className="w-12 text-center text-[13px]">ع</span>
      <div className="w-[58px] text-center text-[11px] leading-[18px]">
        10:35 AM
        <br />
        18/06/2025
      </div>
      <button aria-label="Notifications" className="relative mr-6 ml-[18px]">
        <Ico w={17} h={16}>
          <path d="M.5.5h15v11h-5v3.500l-4-3.500h-6z" fill="#fff" stroke="none" />
          <path d="M3 3.500h10M3 6h10M3 8.500h6" stroke="#02020c" />
        </Ico>
        <span className="absolute top-1.5 left-2 flex size-4 items-center justify-center rounded-full border border-[#888] bg-[#333] text-[11px]">5</span>
      </button>
    </footer>
  )
}

function Watermark() {
  return (
    <div className="pointer-events-none absolute bottom-4 left-1/2 flex w-[164px] -translate-x-1/2 flex-col items-center font-bold text-[#bababa]/45 select-none">
      <span className="font-['DejaVu_Sans',sans-serif] text-[46px] leading-8">مستقل</span>
      <span className="font-['Noto_Sans',sans-serif] text-[25px] leading-7">mostaql.com</span>
    </div>
  )
}

export default function App() {
  return (
    <div className="relative flex h-screen flex-col overflow-hidden bg-[#efefef] font-['Open_Sans','DejaVu_Sans',sans-serif] text-[#2b2b2b]">
      <TitleBar />
      <MenuBar />
      <Ribbon />
      <FormulaBar />
      <Worksheet />
      <SheetTabs />
      <StatusBar />
      <Taskbar />
      <Watermark />
    </div>
  )
}
